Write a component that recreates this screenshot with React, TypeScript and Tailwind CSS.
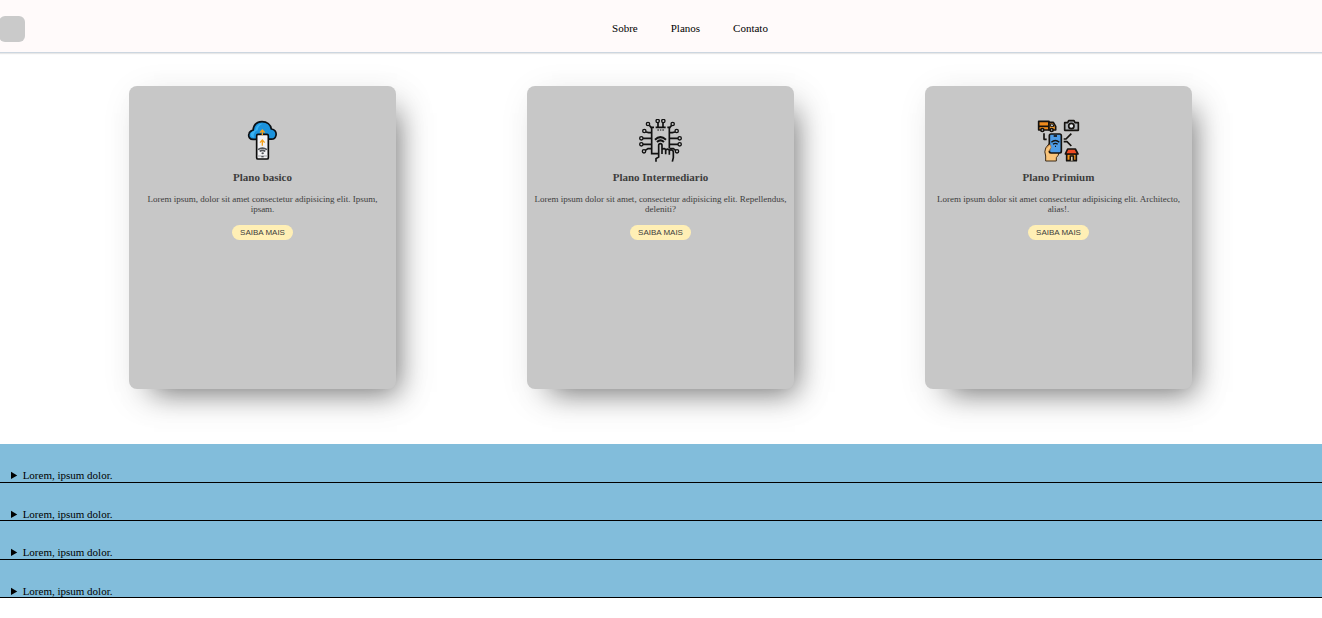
import type { ReactNode } from "react";

function CloudPhoneIcon() {
  return (
    <svg viewBox="18 27 129 129" className="size-[43px]" aria-hidden="true">
      <path
        d="M58 88 C44 90 39 80 42 71 C44 63 50 62 54 61 C56 44 66 35 81 35 C96 35 107 44 109 57 C119 58 125 66 123 76 C121 85 114 89 104 87 Z"
        fill="#1c93dc"
        stroke="#0b1015"
        strokeWidth="5"
        strokeLinejoin="round"
      />
      <path d="M61 60 C64 46 72 41 82 41 C73 46 69 52 68 61 C59 64 54 72 57 83 C47 82 44 72 51 65 Z" fill="#39b2f2" />
      <rect x="65" y="73" width="35" height="74" rx="4" fill="#f1f1f3" stroke="#0b0b0b" strokeWidth="5" />
      <path d="M68 138 H97" stroke="#b4b6b9" strokeWidth="4" />
      <path d="M79 140 H86" stroke="#55575a" strokeWidth="4" />
      <path d="M82 76 V60 M75 68 L82 60 L89 68 M82 107 V91 M75 98 L82 90 L89 98" fill="none" stroke="#f5a11c" strokeWidth="4" />
      <path d="M69 119 Q82 110 96 119 M74 124 Q82 118 91 124 M80 129 L83 130 L86 129" fill="none" stroke="#505357" strokeWidth="5" />
    </svg>
  );
}

function CircuitTouchIcon() {
  return (
    <svg viewBox="21 21 129 129" className="size-[43px]" aria-hidden="true">
      <g fill="none" stroke="#111" strokeWidth="5">
        <path d="M78 125 H59 V46 H66 M71 46 H101 M106 46 H112 V108" />
        <path d="M76 54 H81 M84 54 H88 M91 54 H96" strokeWidth="3" />
        <path d="M78 31 V46 M93 31 V46 M52 40 L59 49 M119 40 L112 49 M42 60 L50 62 H59 M129 60 L121 62 H112 M32 79 H59 M112 79 H140 M32 97 H59 M112 97 H140 M40 115 L48 110 H59 M131 115 L124 110 H112" />
        <path d="M69 83 Q85 68 102 83 M75 90 Q85 80 96 90" strokeWidth="6" />
        <path d="M80 126 V100 Q80 95 85 95 Q90 95 90 100 V126 M90 112 Q98 107 101 114 V127 M101 114 Q109 108 112 115 V128 M112 115 Q124 111 124 121 V137 L121 149 M80 125 V135 L72 140 V149" />
      </g>
      <g fill="#c7c7c7" stroke="#111" strokeWidth="4">
        <circle cx="77" cy="27" r="5" />
        <circle cx="94" cy="27" r="5" />
        <circle cx="48" cy="36" r="5" />
        <circle cx="122" cy="36" r="5" />
        <circle cx="37" cy="57" r="5" />
        <circle cx="134" cy="57" r="5" />
        <circle cx="28" cy="79" r="5" />
        <circle cx="143" cy="79" r="5" />
        <circle cx="28" cy="97" r="5" />
        <circle cx="143" cy="97" r="5" />
        <circle cx="36" cy="118" r="5" />
        <circle cx="135" cy="118" r="5" />
      </g>
    </svg>
  );
}

function SmartServicesIcon() {
  return (
    <svg viewBox="21 21 129 129" className="size-[43px]" aria-hidden="true">
      <g stroke="#15120f" strokeWidth="5" strokeLinejoin="round">
        <path d="M26 28 H57 V54 H26 Z" fill="#ee8a1d" />
        <path d="M57 31 H70 L77 43 V54 H57 Z" fill="#f49b2d" />
        <path d="M61 36 H68 L72 43 H61 Z" fill="#d6e5ee" strokeWidth="3" />
        <path d="M25 43 H57" fill="none" />
        <circle cx="37" cy="54" r="4.5" fill="#d8d8d8" />
        <circle cx="65" cy="54" r="4.5" fill="#d8d8d8" />
        <path d="M104 32 H113 L116 26 H132 L135 32 H145 V55 H104 Z" fill="#b0b4b8" />
        <circle cx="124" cy="42" r="8" fill="#e8ecef" />
        <path d="M42 64 V82 H50 M101 81 H108 L124 65 M101 89 H111 L124 102" fill="none" />
        <path d="M47 147 V132 Q42 119 47 108 L58 94 L63 104 V119 H88 Q86 131 79 137 V147 Z" fill="#fac57b" stroke="#3b2a18" strokeWidth="3" />
        <rect x="58" y="66" width="36" height="57" rx="5" fill="#4d9be6" />
        <path d="M71 72 H81" fill="none" />
        <path d="M64 91 Q76 80 88 91 M69 97 Q76 91 83 97 M75 103 H78" fill="none" strokeWidth="4" />
        <path d="M48 110 L58 98 Q64 99 63 106 L57 118" fill="#fac57b" stroke="#a5672c" strokeWidth="2" />
        <path d="M110 125 H139 V146 H110 Z" fill="#f4941f" />
        <path d="M113 111 H136 L144 126 H106 Z" fill="#ef4c24" />
        <path d="M121 146 V132 H130 V146" fill="#fff0d0" />
      </g>
    </svg>
  );
}

type Plan = { title: string; text: string; icon: ReactNode };

const plans: Plan[] = [
  {
    title: "Plano basico",
    text: "Lorem ipsum, dolor sit amet consectetur adipisicing elit. Ipsum, ipsam.",
    icon: <CloudPhoneIcon />,
  },
  {
    title: "Plano Intermediario",
    text: "Lorem ipsum dolor sit amet, consectetur adipisicing elit. Repellendus, deleniti?",
    icon: <CircuitTouchIcon />,
  },
  {
    title: "Plano Primium",
    text: "Lorem ipsum dolor sit amet consectetur adipisicing elit. Architecto, alias!.",
    icon: <SmartServicesIcon />,
  },
];

const links = [
  { label: "Sobre", href: "#sobre" },
  { label: "Planos", href: "#planos" },
  { label: "Contato", href: "#contato" },
];

const questions = ["q1", "q2", "q3", "q4"];

export default function App() {
  return (
    <div className="font-['Liberation_Serif',serif] text-[11px] leading-3 text-black">
      <header className="flex items-center border-b border-[#ccd6e0] bg-[#fffafa] pt-4 pb-[10px] shadow-[0_1px_1px_#e8e8e8]">
        <button type="button" aria-label="Menu" className="-ml-px size-[26px] rounded-md bg-[#cacaca]" />
        <nav className="flex-1 pb-0.5">
          <ul className="flex justify-center">
            {links.map((link) => (
              <li key={link.label} className="ml-[33px]">
                <a href={link.href}>{link.label}</a>
              </li>
            ))}
          </ul>
        </nav>
      </header>

      <main>
        <section id="planos" className="flex flex-wrap justify-center gap-[131px] pt-[33px] pr-px pb-[55px]">
          {plans.map((plan) => (
            <article
              key={plan.title}
              className="flex min-h-[303px] w-[267px] flex-col items-center rounded-lg bg-[#c7c7c7] px-1.5 pt-[33px] text-center text-[#3d3d3d] shadow-[13px_15px_27px_-12px_rgba(0,0,0,0.5),7px_9px_36px_rgba(0,0,0,0.1)]"
            >
              {plan.icon}
              <h2 className="mt-[9px] font-bold">{plan.title}</h2>
              <p className="mt-[11px] text-[9px] leading-[10px]">{plan.text}</p>
              <button
                type="button"
                className="mt-[11px] h-[15px] rounded-full bg-[#ffefb5] px-2 font-['Liberation_Sans',sans-serif] text-[8px] leading-[15px]"
              >
                SAIBA MAIS
              </button>
            </article>
          ))}
        </section>

        <section className="grid min-h-[154px] auto-rows-fr bg-[#82bddb]">
          {questions.map((id) => (
            <details key={id} className="border-b border-black pt-[25px]">
              <summary className="cursor-pointer pl-[11px]">Lorem, ipsum dolor.</summary>
              <p className="px-[25px] py-2">Lorem, ipsum dolor.</p>
            </details>
          ))}
        </section>
      </main>
    </div>
  );
}
